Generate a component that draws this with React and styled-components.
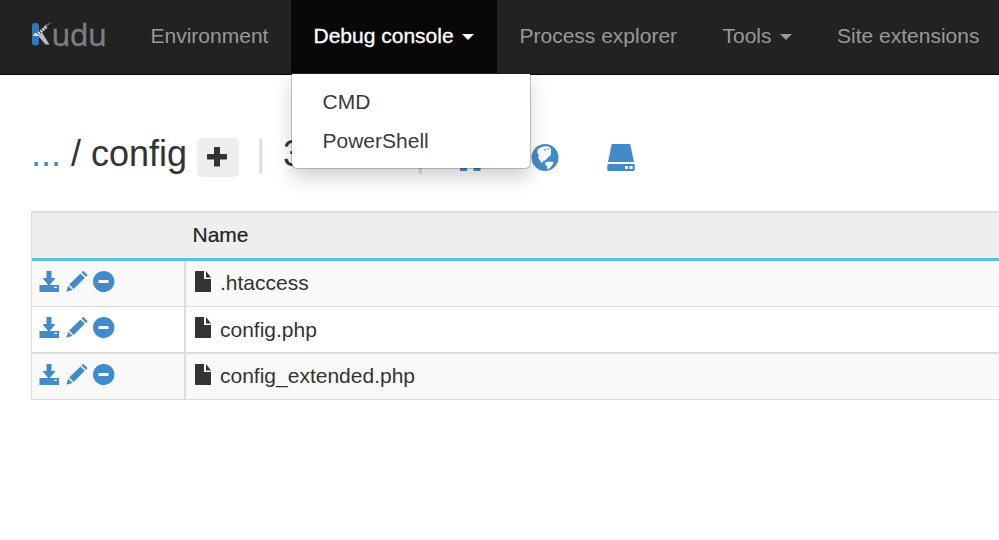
import React from 'react';
import styled, { createGlobalStyle } from 'styled-components';

const GlobalStyle = createGlobalStyle`
  * { box-sizing: border-box; }
  html, body { margin: 0; background: #fff; }
  body {
    overflow: hidden;
    color: #333;
    font: 21px/30px "Liberation Sans", Arial, sans-serif;
  }
`;

const Page = styled.div`
  width: 999px;
  height: 540px;
  overflow: hidden;
`;

const Navbar = styled.header`
  display: flex;
  height: 75px;
  padding-left: 31px;
  background: #222;
  border-bottom: 1px solid #080808;
`;

const Brand = styled.a`
  display: flex;
  align-items: flex-start;
  width: 97px;
  padding-top: 15px;
  color: #7c7e83;
  font: 30.5px/39px "Noto Sans", sans-serif;
  letter-spacing: -0.5px;
  -webkit-text-stroke: 0.3px #7c7e83;
`;

const LogoMark = styled.svg`
  flex: none;
  width: 20.5px;
  height: 36px;
`;

const NavItem = styled.div`
  position: relative;
  flex: none;
  width: ${(p) => p.$width}px;
  height: 73px;
  padding: 21px 0 0 22.5px;
  white-space: nowrap;
  color: ${(p) => (p.$open ? '#fff' : '#999')};
  background: ${(p) => (p.$open ? '#080808' : 'transparent')};
  -webkit-text-stroke: ${(p) => (p.$open ? '0.3px #fff' : '0')};
`;

const Caret = styled.span`
  display: inline-block;
  margin-left: 8px;
  vertical-align: middle;
  border-top: 6px solid currentColor;
  border-left: 6px solid transparent;
  border-right: 6px solid transparent;
`;

const Menu = styled.div`
  position: absolute;
  top: 74px;
  left: 0;
  z-index: 2;
  width: 240px;
  height: 95px;
  padding-top: 8px;
  color: #3a3a3a;
  background: #fff;
  background-clip: padding-box;
  border: 1px solid rgba(0, 0, 0, 0.2);
  border-top: 0;
  border-radius: 0 0 6px 6px;
  box-shadow: 0 9px 18px rgba(0, 0, 0, 0.175);
  -webkit-text-stroke: 0;
`;

const MenuItem = styled.div`
  height: 39px;
  padding: 5px 30.5px 4px;
`;

const PathBar = styled.h3`
  display: flex;
  height: 136px;
  margin: 0;
  padding: 59px 0 0 31px;
  font-size: 36px;
  font-weight: 400;
  line-height: 40px;
  white-space: pre;
`;

const ParentLink = styled.a`
  color: #428bca;
`;

const AddButton = styled.span`
  display: flex;
  align-items: center;
  justify-content: center;
  width: 42px;
  height: 39px;
  margin: 4px 17px 0 10px;
  padding: 0 3px 2px 0;
  background: #eee;
  border-radius: 5px;
`;

const Separator = styled.span`
  color: #dadde2;
`;

const ItemCount = styled.span`
  width: 150px;
  padding-left: 17.5px;
`;

const Shortcut = styled.a`
  display: flex;
  width: 28px;
  height: 28px;
  margin: 10px 0 0 ${(p) => p.$gap}px;
  color: #428bca;
`;

const Glyph = styled.svg`
  flex: none;
  width: ${(p) => p.$w}px;
  height: ${(p) => p.$h}px;
  fill: currentColor;
`;

const FileTable = styled.div`
  margin-left: 31px;
  border-left: 1px solid #ddd;
`;

const HeaderRow = styled.div`
  height: 50px;
  padding: 7px 0 0 160.5px;
  color: #222;
  background: #eee;
  border-top: 2px solid #ddd;
  border-bottom: 3px solid #5bc0de;
  -webkit-text-stroke: 0.2px #222;
`;

const FileRow = styled.div`
  display: grid;
  grid-template-columns: 154px 1fr;
  height: ${(p) => p.$height}px;
  background: ${(p) => (p.$striped ? '#f9f9f9' : '#fff')};
  border-bottom: ${(p) => p.$line}px solid #ddd;
`;

const Actions = styled.div`
  display: flex;
  gap: 5.6px;
  padding: 10px 0 0 7px;
  color: #428bca;
  border-right: 2px solid #ddd;
`;

const FileName = styled.div`
  display: flex;
  gap: 9px;
  padding: ${(p) => p.$top}px 0 0 9px;
`;

const FileGlyph = styled(Glyph)`
  margin-top: ${(p) => p.$shift}px;
`;

const Logo = () => (
  <LogoMark viewBox="0 0 20.5 36">
    <rect x="1" y="8" width="7" height="22.5" rx="3.2" fill="#2e79be" />
    <path d="M8 20.5 11 17.5 18.5 29.5H14.5L8 22Z" fill="#bcbcbd" />
    <path d="M7.5 18.8 16 11" stroke="#d9d9d9" strokeWidth="3.2" strokeDasharray="2 .8" fill="none" />
    <path d="M14 11 19.5 8" stroke="#999" strokeWidth="1.3" strokeDasharray="2 .7" />
    <path d="M2 20.5 4 18 7 19 8 21Z" fill="#fff" />
  </LogoMark>
);

const Download = () => (
  <Glyph $w={21} $h={21} viewBox="0 0 21 21">
    <path fillRule="evenodd" d="M7.5 0h5v7H16.5l-5.7 7H20v7H.5v-7H9.2L3.5 7h4ZM15 15.8v1.2h3v-1.2Z" />
  </Glyph>
);

const Pencil = () => (
  <Glyph $w={22} $h={21} viewBox="0 0 22 21">
    <path d="M.3 20.8 2.2 14.7 6.6 19ZM3.2 13.5 14.5 2.4 18.8 6.7 7.7 17.9ZM15.5 1.4 16.4.5Q17.2-.3 18 .5L21 3.4Q21.8 4.2 21 5L19.9 5.8Z" />
  </Glyph>
);

const Remove = () => (
  <Glyph $w={22} $h={21.5} viewBox="0 0 22 21.5">
    <path fillRule="evenodd" d="M10.7 0a10.7 10.6 0 1 0 0 21.2A10.7 10.6 0 0 0 10.7 0ZM5.5 9h10v3H5.5Z" />
  </Glyph>
);

const FILES = [
  { name: '.htaccess', height: 46, line: 1, top: 7, shift: 3, striped: true },
  { name: 'config.php', height: 47, line: 2, top: 8, shift: 2, striped: false },
  { name: 'config_extended.php', height: 46, line: 1, top: 7, shift: 3, striped: true },
];

export default function App() {
  return (
    <Page>
      <GlobalStyle />
      <Navbar>
        <Brand>
          <Logo />
          udu
        </Brand>
        <NavItem $width={163}>Environment</NavItem>
        <NavItem $width={206} $open>
          Debug console
          <Caret />
          <Menu>
            <MenuItem>CMD</MenuItem>
            <MenuItem>PowerShell</MenuItem>
          </Menu>
        </NavItem>
        <NavItem $width={203}>Process explorer</NavItem>
        <NavItem $width={114.5}>
          Tools
          <Caret />
        </NavItem>
        <NavItem $width={184}>Site extensions</NavItem>
      </Navbar>
      <PathBar>
        <ParentLink>...</ParentLink>
        <span> / config</span>
        <AddButton>
          <Glyph $w={20} $h={20} viewBox="0 0 20 20">
            <path d="M7.7 0h4.6q.7 0 .7.7V7h6.3q.7 0 .7.7v4.1q0 .7-.7.7H13v6.3q0 .7-.7.7H7.7q-.7 0-.7-.7v-6.3H.7q-.7 0-.7-.7V7.7Q0 7 .7 7H7V.7Q7 0 7.7 0Z" />
          </Glyph>
        </AddButton>
        <Separator>|</Separator>
        <ItemCount>3 items</ItemCount>
        <Separator>|</Separator>
        <Shortcut $gap={31}>
          <Glyph $w={28} $h={28} viewBox="0 0 28 28">
            <path d="M14 1 27 14h-2.5v13h-7v-9H11v9H4V14H1Z" />
          </Glyph>
        </Shortcut>
        <Shortcut $gap={47}>
          <Glyph $w={28} $h={28} viewBox="0 0 28 28">
            <circle cx="14" cy="13.5" r="13.5" />
            <path fill="#fff" d="M6.5 5.5 10 3.2l4-1 4 .3 2 2.500v3.500l-.5 3-2 1.500-2 2-1.500 1.500-2.500.5.5 2.500-2-1.500-3-4.500 1-2-1.500-2ZM13.500 19l3-1.200h5.500l.5 1.200-2.500 4-3.500 2.500-.8-3.500Z" />
            <path d="m12.500 5.500 2.500-.8-.8 2ZM16 4l2 .8-1 1.500Z" />
          </Glyph>
        </Shortcut>
        <Shortcut $gap={48}>
          <Glyph $w={28} $h={28} viewBox="0 0 28 28">
            <path d="M5.5 0h16.9q.8 0 1 .8L27 18H1L4.5.8Q4.7 0 5.5 0ZM1.5 20h25q1.2 0 1.2 1.2v4.6q0 1.2-1.2 1.2h-25Q.3 27 .3 25.8v-4.6Q.3 20 1.5 20Z" />
            <path fill="#fff" d="M18 22h3v3h-3ZM22.5 22h3v3h-3Z" />
          </Glyph>
        </Shortcut>
      </PathBar>
      <FileTable>
        <HeaderRow>Name</HeaderRow>
        {FILES.map((file) => (
          <FileRow key={file.name} $height={file.height} $line={file.line} $striped={file.striped}>
            <Actions>
              <Download />
              <Pencil />
              <Remove />
            </Actions>
            <FileName $top={file.top}>
              <FileGlyph $w={16} $h={21} $shift={file.shift} viewBox="0 0 16 21">
                <path d="M.6 0H9v8h7v12.3q0 .7-.7.7H.6Q0 21 0 20.3V.7Q0 0 .6 0ZM11 0l5 6.6h-5Z" />
              </FileGlyph>
              {file.name}
            </FileName>
          </FileRow>
        ))}
      </FileTable>
    </Page>
  );
}
